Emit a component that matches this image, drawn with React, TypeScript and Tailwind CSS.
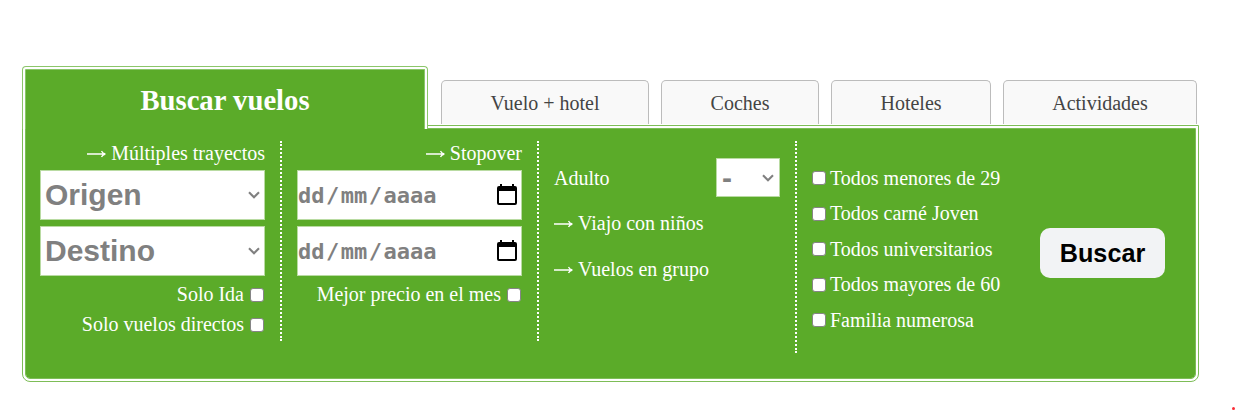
function Check() {
  return (
    <input
      type="checkbox"
      className="mt-px h-[14px] w-[14px] shrink-0 appearance-none rounded-[3px] border border-[#858585] bg-white"
    />
  );
}

function Chevron() {
  return (
    <svg width="14" height="10" viewBox="0 0 14 10" className="shrink-0" fill="none" stroke="#808080" strokeWidth="2.1">
      <path d="M2 2.2l5 5 5-5" />
    </svg>
  );
}

function ArrowLink({ children }: { children: string }) {
  return (
    <a className="flex items-center gap-[5px] whitespace-nowrap">
      <svg width="19" height="8" viewBox="0 0 19 8" fill="none" stroke="white" strokeWidth="1.3" className="mt-px">
        <path d="M0 4h18M14.5 1q1 2.3 3.8 3q-2.8.7-3.8 3" />
      </svg>
      {children}
    </a>
  );
}

function PlaceSelect({ label }: { label: string }) {
  return (
    <div className="mb-[6px] flex h-[50px] items-center justify-between border border-[#b9dba2] bg-white pl-1 pr-[3px] font-['Liberation_Sans'] text-[30px] font-bold text-[#808080]">
      <span>{label}</span>
      <Chevron />
    </div>
  );
}

function DateField() {
  return (
    <div className="mb-[6px] flex h-[50px] items-center justify-between border border-[#b9dba2] bg-white pl-0 pr-[4px] font-['DejaVu_Sans_Mono'] text-[22px] font-bold text-[#808080]">
      <span className="flex pt-px">
        <span>dd</span>
        <span className="mx-[1.5px]">/</span>
        <span>mm</span>
        <span className="mx-[1.5px]">/</span>
        <span>aaaa</span>
      </span>
      <svg width="20" height="22" viewBox="0 0 20 22" fill="#000">
        <path fillRule="evenodd" d="M3 0h2v2h10V0h2v2h1q2 0 2 2v15q0 2-2 2H2q-2 0-2-2V4q0-2 2-2h1zM2 7v12h16V7z" />
      </svg>
    </div>
  );
}

const tabs = [
  { label: "Vuelo + hotel", box: "w-[208px] mr-3" },
  { label: "Coches", box: "w-[158px] mr-3" },
  { label: "Hoteles", box: "w-[160px] mr-3" },
  { label: "Actividades", box: "w-[194px]" },
];

const discounts = [
  "Todos menores de 29",
  "Todos carné Joven",
  "Todos universitarios",
  "Todos mayores de 60",
  "Familia numerosa",
];

export default function App() {
  return (
    <main className="relative h-[410px] w-[1235px] overflow-hidden bg-white pl-[22px] pt-[66px] font-['Liberation_Serif'] text-[20px] leading-6 text-white">
      <nav className="flex h-[59px] items-start">
        <div className="relative z-10 mr-[13px] h-[63px] w-[406px] rounded-t-[4px] bg-white">
          <h1 className="flex h-full justify-center rounded-t-[4px] border-4 border-b-0 border-double border-[#8cc66a] bg-[#5bab29] bg-clip-padding pt-[14px] text-[28.7px] font-bold leading-8">
            Buscar vuelos
          </h1>
        </div>
        {tabs.map((t) => (
          <a
            key={t.label}
            className={`mt-[14px] flex h-[44px] justify-center rounded-t-[5px] border border-b-0 border-[#bcbcbc] bg-[#f9f9f9] pt-[10px] text-[#444] ${t.box}`}
          >
            {t.label}
          </a>
        ))}
      </nav>
      <form className="flex h-[257px] w-[1177px] rounded-b-[8px] border-4 border-double border-[#7dbd57] bg-[#5bab29] bg-clip-padding pl-[14px] pt-3">
        <section className="mr-[15px] h-[200px] w-[242px] border-r-2 border-dotted border-white pr-[15px]">
          <div className="flex h-[29px] items-start justify-end"><ArrowLink>Múltiples trayectos</ArrowLink></div>
          <PlaceSelect label="Origen" />
          <PlaceSelect label="Destino" />
          <label className="-mt-[3px] flex h-[30px] items-center justify-end gap-[6px] pr-px">Solo Ida <Check /></label>
          <label className="flex h-[30px] items-center justify-end gap-[6px] pr-px">Solo vuelos directos <Check /></label>
        </section>
        <section className="mr-[15px] h-[200px] w-[242px] border-r-2 border-dotted border-white pr-[15px]">
          <div className="flex h-[29px] items-start justify-end"><ArrowLink>Stopover</ArrowLink></div>
          <DateField />
          <DateField />
          <label className="-mt-[3px] flex h-[30px] items-center justify-end gap-[6px] pr-px">Mejor precio en el mes <Check /></label>
        </section>
        <section className="mr-[15px] h-[212px] w-[243px] border-r-2 border-dotted border-white pr-[15px] pt-[17px]">
          <div className="flex h-[39px] items-center justify-between">
            Adulto
            <div className="flex h-[39px] w-[64px] items-center justify-between border border-[#b9dba2] bg-white pl-[5px] pr-1 font-['Liberation_Sans'] text-[30px] font-bold text-[#808080]">
              <span>-</span>
              <Chevron />
            </div>
          </div>
          <div className="mt-[14px] flex flex-col gap-[22px]">
            <ArrowLink>Viajo con niños</ArrowLink>
            <ArrowLink>Vuelos en grupo</ArrowLink>
          </div>
        </section>
        <section className="flex w-[228px] flex-col gap-[11.5px] pt-[24.5px]">
          {discounts.map((d) => (
            <label key={d} className="flex items-center gap-[4px] whitespace-nowrap"><Check />{d}</label>
          ))}
        </section>
        <button type="button" className="mt-[87px] h-[50px] w-[125px] rounded-[10px] bg-[#f2f3f5] font-['Liberation_Sans'] text-[25.2px] font-bold text-black">
          Buscar
        </button>
      </form>
      <i className="absolute left-[1232px] top-[407px] h-[3px] w-[3px] rounded-full bg-red-500" />
    </main>
  );
}
